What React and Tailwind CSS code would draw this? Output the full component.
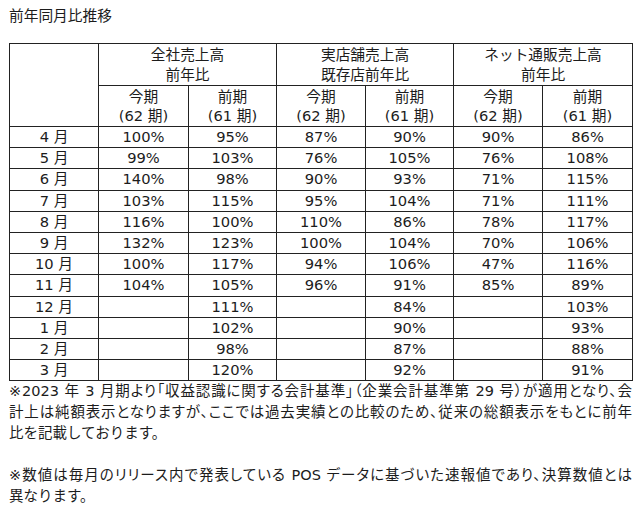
const rows = [
  ["4 月", "100%", "95%", "87%", "90%", "90%", "86%"],
  ["5 月", "99%", "103%", "76%", "105%", "76%", "108%"],
  ["6 月", "140%", "98%", "90%", "93%", "71%", "115%"],
  ["7 月", "103%", "115%", "95%", "104%", "71%", "111%"],
  ["8 月", "116%", "100%", "110%", "86%", "78%", "117%"],
  ["9 月", "132%", "123%", "100%", "104%", "70%", "106%"],
  ["10 月", "100%", "117%", "94%", "106%", "47%", "116%"],
  ["11 月", "104%", "105%", "96%", "91%", "85%", "89%"],
  ["12 月", "", "111%", "", "84%", "", "103%"],
  ["1 月", "", "102%", "", "90%", "", "93%"],
  ["2 月", "", "98%", "", "87%", "", "88%"],
  ["3 月", "", "120%", "", "92%", "", "91%"],
];

const groups = [
  ["全社売上高", "前年比"],
  ["実店舗売上高", "既存店前年比"],
  ["ネット通販売上高", "前年比"],
];

const cell = "border border-[#222] text-center p-0";
const full = "whitespace-nowrap text-justify [text-align-last:justify] [font-feature-settings:'palt']";

export default function App() {
  return (
    <div className="w-[640px] h-[509px] bg-white text-[#1c1c1c] text-[14.7px] font-['DejaVu_Sans','Noto_Sans_CJK_JP',sans-serif] pl-[9px] pr-[8px] pt-[4px] overflow-hidden">
      <div className="h-[23px] leading-[23px]">前年同月比推移</div>

      <table className="table-fixed border-collapse w-[623px] mt-[16px]">
        <colgroup>
          <col className="w-[89px]" />
          <col className="w-[90px]" />
          <col className="w-[88px]" />
          <col className="w-[89px]" />
          <col className="w-[88px]" />
          <col className="w-[89px]" />
          <col className="w-[90px]" />
        </colgroup>
        <thead>
          <tr className="h-[42px]">
            <th rowSpan={2} className={cell}></th>
            {groups.map(([a, b]) => (
              <th key={a} colSpan={2} className={`${cell} font-normal leading-[20px]`}>
                <div>{a}</div>
                <div>{b}</div>
              </th>
            ))}
          </tr>
          <tr className="h-[41px]">
            {[0, 1, 2].map((g) => [
              <th key={`a${g}`} className={`${cell} font-normal leading-[19px]`}>
                <div>今期</div>
                <div>(62 期)</div>
              </th>,
              <th key={`b${g}`} className={`${cell} font-normal leading-[19px]`}>
                <div>前期</div>
                <div>(61 期)</div>
              </th>,
            ])}
          </tr>
        </thead>
        <tbody>
          {rows.map((r) => (
            <tr key={r[0]} className="h-[21.2px]">
              {r.map((v, i) => (
                <td key={i} className={`${cell} leading-[20px]`}>
                  {v}
                </td>
              ))}
            </tr>
          ))}
        </tbody>
      </table>

      <div className="leading-[21px] w-[623px] text-[14.5px]">
        <div className={full}>
          ※2023 年 3 月期より「収益認識に関する会計基準」（企業会計基準第 29 号）が適用となり、会
        </div>
        <div className={full}>
          計上は純額表示となりますが、ここでは過去実績との比較のため、従来の総額表示をもとに前年
        </div>
        <div>比を記載しております。</div>
        <div className="h-[21px]"></div>
        <div className={full}>
          ※数値は毎月のリリース内で発表している POS データに基づいた速報値であり、決算数値とは
        </div>
        <div>異なります。</div>
      </div>
    </div>
  );
}
